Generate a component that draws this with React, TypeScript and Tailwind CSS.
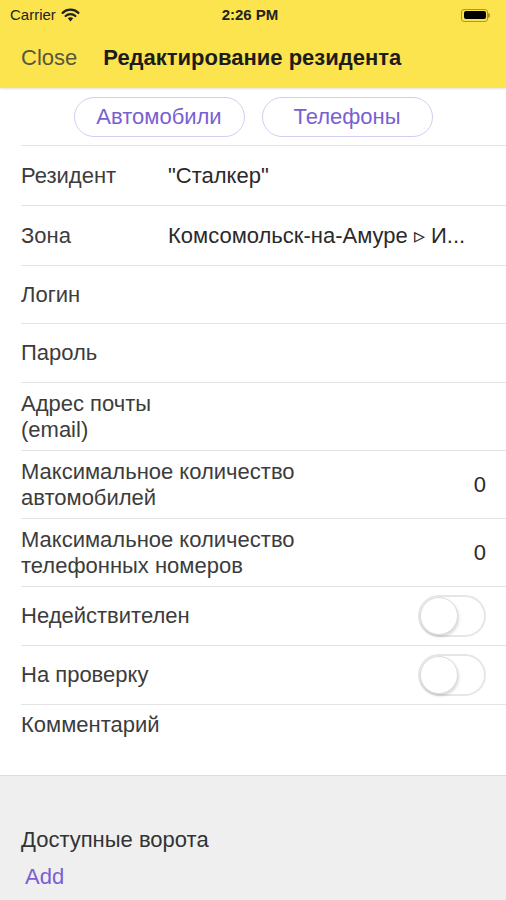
import React from "react";

const font = { fontFamily: '"Liberation Sans", Arial, sans-serif' };

function Switch() {
  return (
    <div className="w-[68px] h-[42px] rounded-full border-2 border-[#e6e6e6] bg-white relative">
      <div className="absolute left-0 top-0 w-[38px] h-[38px] rounded-full bg-white border border-[#dcdcdc] shadow-[1px_2px_3px_rgba(0,0,0,0.15)]" />
    </div>
  );
}

function Row({ label, value, right, h = "h-[59px]" }: { label: React.ReactNode; value?: string; right?: React.ReactNode; h?: string }) {
  return (
    <div className={`flex items-center ${h} pr-[20px] border-b border-[#e3e3e3]`}>
      <div className="w-[147px] shrink-0 text-[#3c3c3c] leading-[26px]">{label}</div>
      <div className="flex-1 min-w-0 text-[#2a2a2a] whitespace-nowrap overflow-hidden">{value}</div>
      {right}
    </div>
  );
}

export default function App() {
  return (
    <div className="w-[506px] h-[900px] bg-white overflow-hidden text-[22px] leading-[26px]" style={font}>
      <div className="bg-[#fbe44e] shadow-[0_1px_2px_rgba(0,0,0,0.12)] relative z-10">
        <div className="h-[30px] flex items-center px-[10px] text-[15px] leading-[18px] text-[#222]">
          <div className="flex items-center gap-[5px] flex-1">
            <span>Carrier</span>
            <svg width="19" height="14" viewBox="0 0 19 14">
              <path d="M9.5 13.5 L6.8 10.3 A4.2 4.2 0 0 1 12.2 10.3 Z" fill="#222" />
              <path d="M4.6 8 A7.2 7.2 0 0 1 14.4 8" stroke="#222" strokeWidth="2.2" fill="none" strokeLinecap="round" />
              <path d="M1.6 4.9 A11.4 11.4 0 0 1 17.4 4.9" stroke="#222" strokeWidth="2.2" fill="none" strokeLinecap="round" />
            </svg>
          </div>
          <div className="font-bold text-[15px] w-[100px] text-center">2:26 PM</div>
          <div className="flex-1 flex justify-end pr-[6px]">
            <div className="flex items-center">
              <div className="w-[27px] h-[13px] rounded-[3px] border border-[#a89a2a] p-[1.5px]">
                <div className="w-full h-full rounded-[2px] bg-black" />
              </div>
              <div className="w-[2px] h-[5px] bg-[#a89a2a] rounded-r-sm" />
            </div>
          </div>
        </div>
        <div className="h-[58px] flex items-center pl-[21px] pb-[3px]">
          <span className="text-[22px] text-[#58573e] mr-[26px]">Close</span>
          <span className="text-[22px] font-bold text-[#1c1c1c]">Редактирование резидента</span>
        </div>
      </div>

      <div className="h-[57px] flex items-center justify-center gap-[17px] pt-[1px]">
        <div className="h-[40px] w-[171px] rounded-full border border-[#d3cdf2] flex items-center justify-center text-[#7a5fd3]">
          Автомобили
        </div>
        <div className="h-[40px] w-[171px] rounded-full border border-[#d3cdf2] flex items-center justify-center text-[#7a5fd3]">
          Телефоны
        </div>
      </div>
      <div className="pl-[21px]">
        <div className="border-t border-[#e3e3e3]" />
        <Row h="h-[60px]" label="Резидент" value={'"Сталкер"'} />
        <Row h="h-[60px]" label="Зона" value="Комсомольск-на-Амуре ▹ И..." />
        <Row h="h-[58px]" label="Логин" />
        <Row h="h-[59px]" label="Пароль" />
        <Row h="h-[68px]" label={<>Адрес почты<br />(email)</>} />
        <Row
          h="h-[68px]"
          label={<div className="w-[320px]">Максимальное количество<br />автомобилей</div>}
          right={<span className="text-[#2a2a2a]">0</span>}
        />
        <Row
          h="h-[68px]"
          label={<div className="w-[320px]">Максимальное количество<br />телефонных номеров</div>}
          right={<span className="text-[#2a2a2a]">0</span>}
        />
        <Row h="h-[59px]" label="Недействителен" right={<Switch />} />
        <Row h="h-[59px]" label="На проверку" right={<Switch />} />
        <div className="h-[70px] pt-[7px] text-[#3c3c3c]">Комментарий</div>
      </div>
      <div className="bg-[#efefef] border-t border-[#dddddd] h-[200px] pl-[21px] pt-[51px]">
        <div className="text-[#333]">Доступные ворота</div>
        <div className="text-[#7a5fd3] mt-[11px] pl-[4px]">Add</div>
      </div>
    </div>
  );
}
